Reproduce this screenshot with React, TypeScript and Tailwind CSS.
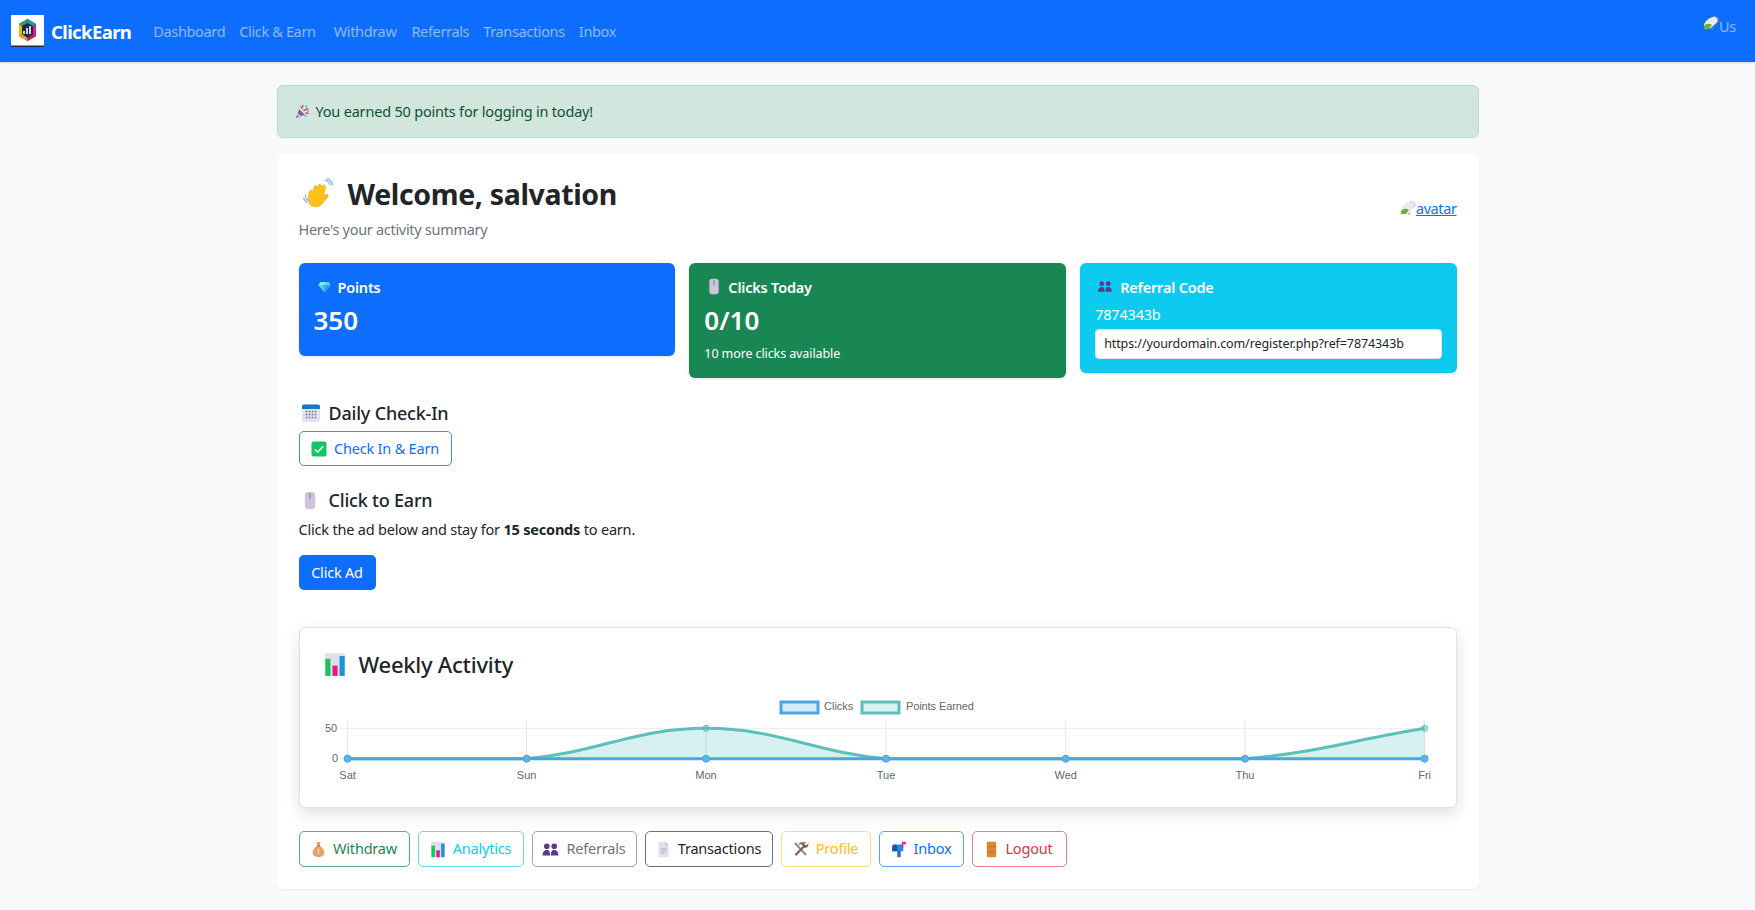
import React from "react";

const Party = ({ c = "" }: { c?: string }) => (
  <svg viewBox="0 0 16 16" className={c}>
    <path d="M1 15 4.500 5.500 10.500 11.500Z" fill="#7b5a9e" />
    <path d="M3 9.500 6.500 13 4.500 13.900 2.200 11.800Z" fill="#d8c7e4" />
    <path d="M7 5 8.500 1M9 7l5-2M11 9.500l3.500.5" stroke="#e0246f" strokeWidth="1.400" />
    <circle cx="12" cy="2.500" r="1" fill="#1ea7e0" />
    <circle cx="5" cy="2.500" r=".9" fill="#f5a623" />
    <circle cx="14" cy="7.500" r=".9" fill="#19b5a5" />
    <circle cx="11" cy="12.500" r=".9" fill="#1ea7e0" />
  </svg>
);
const Wave = ({ c = "" }: { c?: string }) => (
  <svg viewBox="0 0 32 32" className={c}>
    <g transform="rotate(22 14 17)">
      <path d="M6 20c-1-3-1-5 .5-5.500 1-.3 1.700.5 2.300 1.500L8 11c-.5-1.500.6-2.500 1.800-2 .8.3 1.100 1 1.400 1.800L11 8c-.2-1.500 1-2.500 2.200-1.800.8.400 1 1.200 1.300 2L15 6.500c.3-1.200 1.500-1.700 2.500-1 .9.600 1 1.600 1 2.600L19.500 15c1-1.500 2.500-3 3.800-2.300 1.100.6.700 2 0 3.300L21 23c-1.500 4-5 6-9 5.200-3.500-.7-5-4-6-8.200Z" fill="#fcc21b" stroke="#f0a912" strokeWidth=".6" />
    </g>
    <path d="M21 2c3 .5 5 2.500 5.500 5.500M23 0.500c3 .8 5 3 6 6.500" stroke="#8fb4ec" strokeWidth="1.300" fill="none" />
    <path d="M2 16c.5 3 1.500 5 3.500 6.500M0.500 19c.8 2.500 2 4 3.500 5" stroke="#8fb4ec" strokeWidth="1.300" fill="none" />
  </svg>
);
const Gem = ({ c = "" }: { c?: string }) => (
  <svg viewBox="0 0 16 16" className={c}>
    <path d="M3 2.500h10l2.500 4L8 15 .5 6.500Z" fill="#5fd4f0" />
    <path d="M3 2.500h5v4H.5Z" fill="#8ee8f8" />
    <path d="M8 6.500h7.500L8 15Z" fill="#12a3d8" />
    <path d="M5 6.500h6L8 15Z" fill="#2bb9e6" />
  </svg>
);
const Mouse = ({ c = "" }: { c?: string }) => (
  <svg viewBox="0 0 16 20" className={c}>
    <rect x="2.500" y="1" width="11" height="18" rx="3.500" fill="#cfc5da" />
    <path d="M8 3v5" stroke="#857c96" strokeWidth="1.300" strokeLinecap="round" />
  </svg>
);
const People = ({ c = "" }: { c?: string }) => (
  <svg viewBox="0 0 18 16" className={c}>
    <g fill="#5b3a8c">
      <circle cx="5" cy="4.500" r="3" />
      <circle cx="13" cy="4.500" r="3" />
      <path d="M.5 14.500c0-3.500 1.500-6 4.500-6s3.500 2 3.500 6ZM9.500 14.500c0-4 .5-6 3.500-6s4.500 2.500 4.500 6Z" />
    </g>
  </svg>
);
const Calendar = ({ c = "" }: { c?: string }) => (
  <svg viewBox="0 0 20 20" className={c}>
    <rect x="1" y="1.500" width="18" height="17.500" rx="2" fill="#e6e1ee" />
    <path d="M1 6V3.500a2 2 0 0 1 2-2h14a2 2 0 0 1 2 2V6Z" fill="#1578c2" />
    <g fill="#7a6f9b">
      {[5.5, 8.5, 11.5, 14.5].flatMap((x) =>
        [8.5, 11.5, 14.5].map((y) => <rect key={`${x}-${y}`} x={x - 0.8} y={y - 0.8} width="1.600" height="1.600" />)
      )}
    </g>
  </svg>
);
const Check = ({ c = "" }: { c?: string }) => (
  <svg viewBox="0 0 16 16" className={c}>
    <rect x=".5" y=".5" width="15" height="15" rx="2" fill="#16c55f" />
    <path d="M3.800 8.300 6.800 11 12.200 5.200" stroke="#fff" strokeWidth="1.600" fill="none" />
  </svg>
);
const Bars = ({ c = "" }: { c?: string }) => (
  <svg viewBox="0 0 20 22" className={c}>
    <rect x="1" y="1" width="18" height="20" rx="1.500" fill="#e4deea" />
    <rect x="1.500" y="6" width="4.500" height="15" fill="#16c55f" />
    <rect x="7.800" y="12" width="4.500" height="9" fill="#e8168c" />
    <rect x="14" y="3.500" width="4.500" height="17.500" fill="#1a94dc" />
  </svg>
);
const Bag = ({ c = "" }: { c?: string }) => (
  <svg viewBox="0 0 16 18" className={c}>
    <path d="M6 1h4L9.300 5c3 1.500 5 4.500 5 7.500 0 3.500-3 4.500-6.300 4.500s-6.300-1-6.300-4.500C1.700 9.500 3.700 6.500 6.700 5Z" fill="#e3a765" />
    <path d="M6.500 5h3" stroke="#9a6a30" strokeWidth="1" />
    <path d="M8 8v6" stroke="#f6d7a8" strokeWidth="1.500" />
  </svg>
);
const Doc = ({ c = "" }: { c?: string }) => (
  <svg viewBox="0 0 16 20" className={c}>
    <path d="M2 1h8l4 4v14H2Z" fill="#e5deec" />
    <path d="M10 1v4h4Z" fill="#c4b9d1" />
    <path d="M4.500 9h7M4.500 11.500h7M4.500 14h5" stroke="#b3a7c3" strokeWidth="1" />
  </svg>
);
const Tools = ({ c = "" }: { c?: string }) => (
  <svg viewBox="0 0 18 18" className={c}>
    <path d="M3 1.500 15.500 15l-1.700 1.700L1.500 3.500Z" fill="#8a8a92" />
    <path d="M15.500 1a4 4 0 0 0-4.500 5L2 15l1.500 1.800 9-9.300a4 4 0 0 0 4.800-5l-2.300 2.200-1.800-.5-.4-1.700Z" fill="#8b5a3c" />
    <path d="M12 1 7.500 2 6 4.500l3-1 1.500 1.500 2-2Z" fill="#6d6d75" />
  </svg>
);
const Mailbox = ({ c = "" }: { c?: string }) => (
  <svg viewBox="0 0 18 20" className={c}>
    <rect x="7" y="11" width="4" height="8" fill="#2a6bd0" />
    <path d="M1 12V7a3 3 0 0 1 3-3h10v8Z" fill="#1f8ce0" />
    <path d="M1 12V7a3 3 0 0 1 6 0v5Z" fill="#244fa8" />
    <path d="M12.500 1h1.500v7h-1.500Z" fill="#e8168c" />
    <path d="M14 1h3v3h-3Z" fill="#e8168c" />
  </svg>
);
const Door = ({ c = "" }: { c?: string }) => (
  <svg viewBox="0 0 14 20" className={c}>
    <rect x="1.500" y="1" width="11" height="18" rx=".8" fill="#d98a2e" />
    <path d="M1.500 7h11M1.500 13h11" stroke="#b86f1f" strokeWidth=".8" />
  </svg>
);
const Broken = ({ c = "" }: { c?: string }) => (
  <svg viewBox="0 0 16 16" className={c}>
    <path d="M.5 10C1 6 5 2.500 8.500 1.500L11 .5l3.500 1.500.8 3.500-2 2.500-5.800 5-5.500.8C.8 13 .3 11.500.5 10Z" fill="#e9ebee" />
    <path d="M10 1.500 12 .6l3 1.500.6 3-1.500 2" fill="none" stroke="#aeb1b8" strokeWidth=".8" />
    <path d="M.6 14V10.500C3 8 6 7.700 9 9.300L5.700 13.800Z" fill="#6eae3e" />
    <path d="M10 14.500H7.800L10 12Z" fill="#6eae3e" />
  </svg>
);
const Logo = () => (
  <span className="flex h-[32px] w-[33px] flex-col bg-white">
    <svg viewBox="0 0 33 32" className="h-[32px] w-[33px]">
      <path d="M16.500 4 25 9v12l-8.500 5L8 21V9Z" fill="#1b2a4a" />
      <path d="M16.500 4 25 9l-3 2-5.500-3Z" fill="#19a7a0" />
      <path d="M25 9v12l-3-2v-8Z" fill="#e8168c" />
      <path d="M25 21l-8.500 5v-3l5.500-4Z" fill="#c2186b" />
      <path d="M8 9v12l3-2v-8Z" fill="#f0b90b" />
      <path d="M8 9l8.500-5v4L11 11Z" fill="#3a9c5f" />
      <path d="M8 21l8.500 5v-3L11 19Z" fill="#e9a70f" />
      <path d="M13 19v-3M16 19v-6M19 19v-8" stroke="#fff" strokeWidth="1.600" />
      <rect x="0" y="30.500" width="33" height="1.500" fill="#1b2a4a" />
    </svg>
  </span>
);

const Chart = () => {
  const xs = [26.6, 205.6, 385, 565, 744.7, 924, 1103.6];
  const labels = ["Sat", "Sun", "Mon", "Tue", "Wed", "Thu", "Fri"];
  const y50 = 33.3;
  const y0 = 63.7;
  const area =
    "M26.6 63.700L205.600 63.700C277.200 57.500 313.400 33.300 385 33.300C456.600 33.300 493 57.500 565 63.700L924 63.700C996 57.500 1032 45.100 1103.600 33.300";
  return (
    <svg width="1116" height="100" className="block" style={{ fontFamily: "'Liberation Sans', Arial, sans-serif" }}>
      {xs.map((x) => (
        <line key={x} x1={x} x2={x} y1="26" y2="69" stroke="#e6e6e6" strokeWidth="1" />
      ))}
      <line x1="20" x2="1104" y1={y50} y2={y50} stroke="#e9e9e9" />
      <line x1="20" x2="1104" y1={y0} y2={y0} stroke="#e9e9e9" />
      <text x="10" y="36.500" fontSize="11" fill="#666" textAnchor="middle">50</text>
      <text x="14" y="66.500" fontSize="11" fill="#666" textAnchor="middle">0</text>
      {xs.map((x, i) => (
        <text key={labels[i]} x={x} y="84" fontSize="11" fill="#666" textAnchor="middle">{labels[i]}</text>
      ))}
      <rect x="460" y="7" width="37" height="11" fill="rgba(54,162,235,.2)" stroke="#4aa5e3" strokeWidth="3" />
      <text x="503" y="15.200" fontSize="11" fill="#666">Clicks</text>
      <rect x="541" y="7" width="37" height="11" fill="rgba(75,192,192,.2)" stroke="#5cbfbf" strokeWidth="3" />
      <text x="585" y="15.200" fontSize="11" fill="#666" letterSpacing="-.1">Points Earned</text>
      <path d={area + "L1103.600 63.700Z"} fill="rgba(75,192,192,.22)" stroke="none" />
      <path d={area} fill="none" stroke="#5cbfb9" strokeWidth="3" />
      {xs.map((x, i) => (
        <circle key={x} cx={x} cy={i === 2 || i === 6 ? y50 : y0} r="3" fill="rgba(75,192,192,.4)" stroke="#5cbfb9" />
      ))}
      <line x1={xs[0]} x2={xs[6]} y1={y0} y2={y0} stroke="#4aa5e3" strokeWidth="3" />
      {xs.map((x) => (
        <circle key={x} cx={x} cy={y0} r="3.500" fill="#5cb3ef" stroke="#4aa5e3" />
      ))}
    </svg>
  );
};

const actions: [string, string, React.ReactNode][] = [
  ["Withdraw", "w-[111px] border-[#5aa884] text-[#198754]", <Bag c="h-[17px] w-[15px]" />],
  ["Analytics", "w-[106px] border-[#5fdcf4] text-[#0dcaf0]", <Bars c="h-[17px] w-[16px]" />],
  ["Referrals", "w-[105px] border-[#a0a7ad] text-[#6c757d]", <People c="h-[15px] w-[17px]" />],
  ["Transactions", "w-[128px] border-[#6b6e72] text-[#212529]", <Doc c="h-[17px] w-[15px]" />],
  ["Profile", "w-[90px] border-[#ffdc70] text-[#ffc107]", <Tools c="h-[16px] w-[16px]" />],
  ["Inbox", "w-[85px] border-[#5c9ffd] text-[#0d6efd]", <Mailbox c="h-[17px] w-[16px]" />],
  ["Logout", "w-[95px] border-[#e5818b] text-[#dc3545]", <Door c="h-[17px] w-[13px]" />],
];

export default function App() {
  return (
    <div className="min-h-[910px] bg-[#f8f9fa] font-['Noto_Sans','Open_Sans',sans-serif] text-[14.5px] text-[#212529]">
      <nav className="flex h-[62px] items-center bg-[#0d6efd] pl-[11px] pr-[19px] shadow-[0_1px_2px_rgba(0,0,0,0.15)]">
        <Logo />
        <span className="ml-[7px] mt-[1px] text-[18.5px] font-bold tracking-[-0.6px] text-white">ClickEarn</span>
        <div className="ml-[22px] mt-[2px] flex text-[14.5px] tracking-[-0.35px] text-[#8db9fe]">
          <span>Dashboard</span>
          <span className="ml-[14px]">Click &amp; Earn</span>
          <span className="ml-[18px]">Withdraw</span>
          <span className="ml-[15px]">Referrals</span>
          <span className="ml-[14px]">Transactions</span>
          <span className="ml-[14px]">Inbox</span>
        </div>
        <div className="mb-[10px] ml-auto flex items-start text-[#8db9fe]">
          <Broken c="h-[15px] w-[16px]" />
          <span className="text-[14.5px] leading-[20px] tracking-[-0.3px]">Us</span>
        </div>
      </nav>

      <main className="mx-auto w-[1202px] pt-[23px]">
        <div className="flex h-[53px] items-center gap-[6px] rounded-[6px] border border-[#badbcc] bg-[#d1e7dd] px-[17px] text-[#0f5132]">
          <Party c="h-[15px] w-[15px]" />
          <span className="tracking-[-0.2px]">You earned 50 points for logging in today!</span>
        </div>

        <section className="mt-[16px] rounded-[6px] bg-white px-[22px] pb-[22px] pt-[21px] shadow-[0_1px_2px_rgba(0,0,0,0.06)]">
          <div className="flex items-start justify-between">
            <div>
              <h1 className="flex h-[38px] items-center gap-[12px] text-[28.5px] font-bold leading-none tracking-[-0.35px]">
                <Wave c="ml-[4px] h-[33px] w-[33px]" />
                <span>Welcome, salvation</span>
              </h1>
              <p className="mt-[5px] text-[14.5px] leading-[22px] tracking-[-0.3px] text-[#6c757d]">Here's your activity summary</p>
            </div>
            <a className="mt-[23px] flex items-center text-[#0d6efd]">
              <Broken c="h-[15px] w-[16px]" />
              <span className="text-[14.5px] leading-[20px] tracking-[-0.4px] underline">avatar</span>
            </a>
          </div>

          <div className="mt-[23px] grid grid-cols-3 items-start gap-[14.5px]">
            <div className="h-[93px] rounded-[6px] bg-[#0d6efd] px-[15px] pt-[12.5px] text-white shadow-[0_1px_3px_rgba(0,0,0,0.12)]">
              <div className="flex items-center gap-[7px] text-[14.5px] font-semibold leading-[22px] tracking-[-0.2px]">
                <Gem c="ml-[4px] h-[13px] w-[13px]" />
                Points
              </div>
              <div className="mt-[4px] text-[26px] font-semibold leading-[36px]">350</div>
            </div>
            <div className="h-[115px] rounded-[6px] bg-[#198754] px-[15px] pt-[12.5px] text-white shadow-[0_1px_3px_rgba(0,0,0,0.12)]">
              <div className="flex items-center gap-[7px] text-[14.5px] font-semibold leading-[22px] tracking-[-0.2px]">
                <Mouse c="ml-[3px] h-[17px] w-[14px]" />
                Clicks Today
              </div>
              <div className="mt-[4px] text-[26px] font-semibold leading-[36px]">0/10</div>
              <div className="mt-[7px] text-[12.5px] leading-[18px] tracking-[-0.1px]">10 more clicks available</div>
            </div>
            <div className="h-[110px] rounded-[6px] bg-[#0dcaf0] px-[15px] pt-[12.5px] text-white shadow-[0_1px_3px_rgba(0,0,0,0.12)]">
              <div className="flex items-center gap-[7px] text-[14.5px] font-semibold leading-[22px] tracking-[-0.2px]">
                <People c="ml-[2px] h-[13px] w-[16px]" />
                Referral Code
              </div>
              <div className="mt-[5px] text-[14.5px] leading-[22px] tracking-[-0.2px]">7874343b</div>
              <input
                readOnly
                value="https://yourdomain.com/register.php?ref=7874343b"
                className="mt-[4px] h-[30px] w-full rounded-[4px] border border-[#dee2e6] bg-white px-[8px] text-[12.5px] tracking-[-0.1px] text-[#212529]"
              />
            </div>
          </div>

          <h2 className="mt-[21px] flex h-[28px] items-center gap-[8px] text-[18px] font-medium tracking-[-0.2px]">
            <Calendar c="ml-[2px] h-[20px] w-[20px]" />
            Daily Check-In
          </h2>
          <button className="mt-[4px] flex h-[35px] w-[153px] items-center justify-center gap-[7px] rounded-[5px] border border-[#3f8cfd] bg-white text-[14.5px] tracking-[-0.2px] text-[#0d6efd]">
            <Check c="h-[16px] w-[16px]" />
            Check In &amp; Earn
          </button>
          <h2 className="mt-[20px] flex h-[28px] items-center gap-[10px] text-[18px] font-medium tracking-[-0.2px]">
            <Mouse c="ml-[2px] h-[19px] w-[18px]" />
            Click to Earn
          </h2>
          <p className="mt-[3px] text-[14.5px] leading-[24px] tracking-[-0.2px]">
            Click the ad below and stay for <b className="font-bold">15 seconds</b> to earn.
          </p>
          <button className="mt-[14px] flex h-[35px] w-[77px] items-center justify-center rounded-[5px] bg-[#0d6efd] text-[14.5px] tracking-[-0.2px] text-white">
            Click Ad
          </button>

          <div className="mt-[37px] h-[181px] rounded-[6px] border border-[#dfe2e5] bg-white pl-[21px] shadow-[0_6px_16px_rgba(0,0,0,0.12)]">
            <h3 className="flex h-[67px] items-center gap-[9px] pt-[6px] text-[22px] font-medium tracking-[-0.25px]">
              <Bars c="ml-[2px] h-[25px] w-[24px]" />
              <span className="ml-[3px]">Weekly Activity</span>
            </h3>
            <Chart />
          </div>

          <div className="mt-[23px] flex gap-[8px]">
            {actions.map(([label, cls, icon]) => (
              <button
                key={label}
                className={`flex h-[36px] items-center justify-center gap-[7px] rounded-[5px] border bg-white text-[14.5px] tracking-[-0.2px] ${cls}`}
              >
                {icon}
                {label}
              </button>
            ))}
          </div>
        </section>
      </main>
    </div>
  );
}
